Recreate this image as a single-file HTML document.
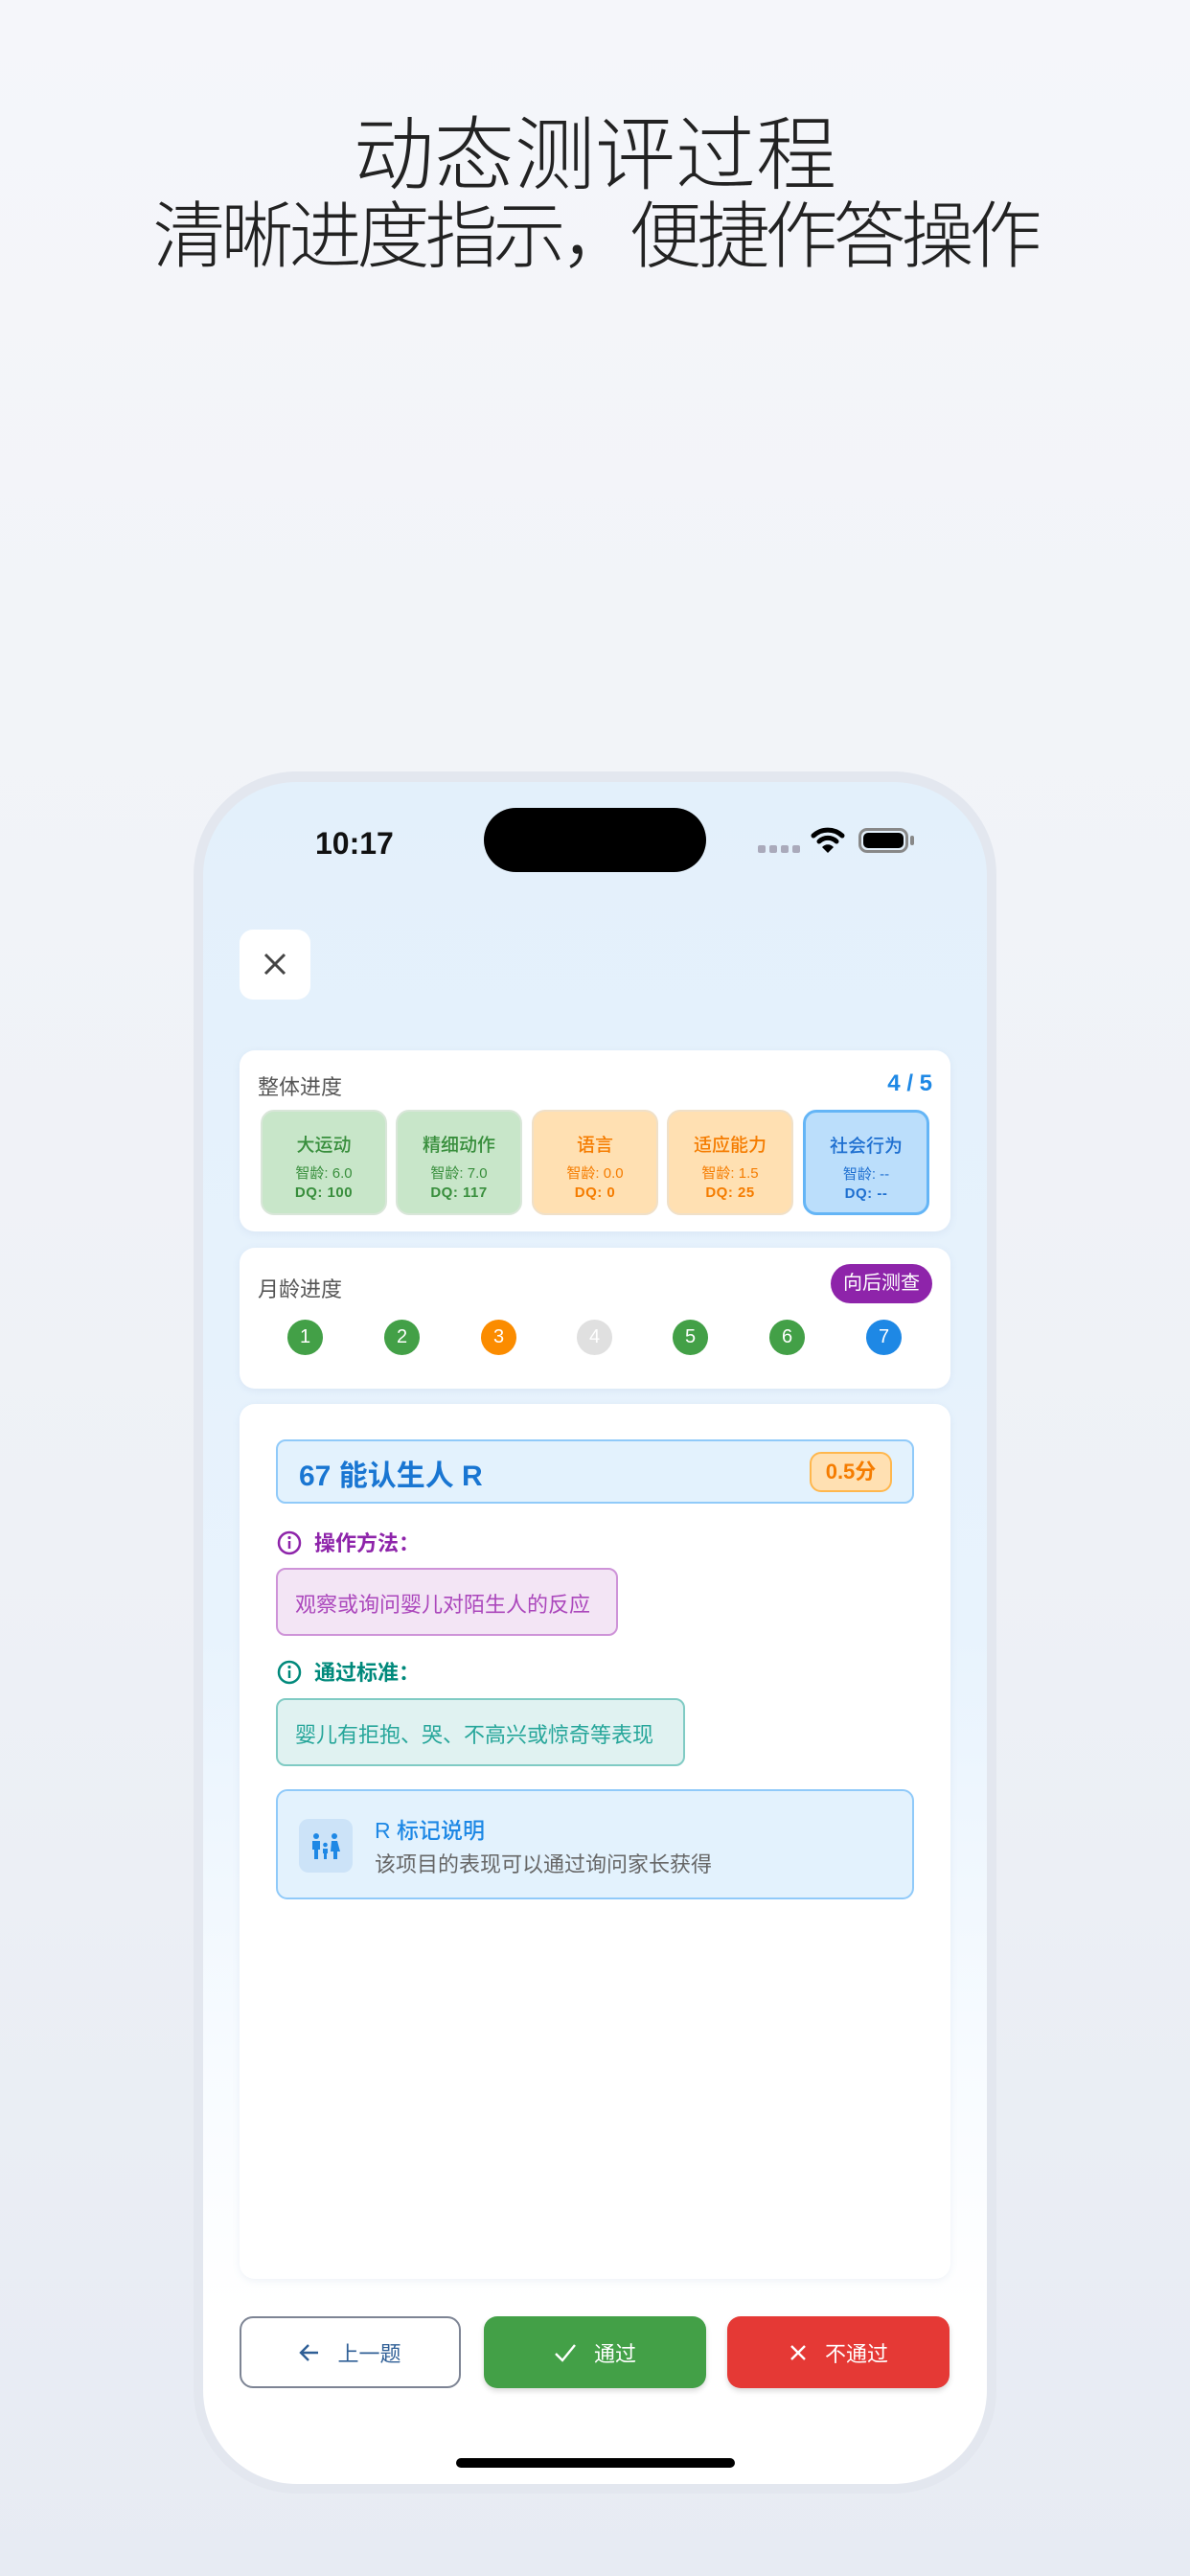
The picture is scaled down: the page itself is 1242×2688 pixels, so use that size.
<!DOCTYPE html>
<html><head><meta charset="utf-8"><style>
*{margin:0;padding:0;box-sizing:border-box}
body{width:1242px;height:2688px;overflow:hidden;background:linear-gradient(180deg,#f5f6fa 0%,#eef1f6 60%,#e7ebf3 100%);font-family:"Liberation Sans","Noto Sans CJK SC",sans-serif;position:relative}
.abs{position:absolute}
.t{position:absolute;left:0;width:1242px;text-align:center;font-weight:300;color:#222;line-height:1;white-space:nowrap}
.frame{left:202px;top:805px;width:838px;height:1797px;border-radius:108px;background:#e3e7ef}
.screen{left:212px;top:816px;width:818px;height:1776px;border-radius:98px;overflow:hidden;background:linear-gradient(180deg,#e3f0fb 0%,#e8f3fd 50%,#f7fbff 75%,#fff 90%)}
.card{position:absolute;background:#fff;border-radius:16px;box-shadow:0 2px 8px rgba(120,150,190,.12)}
.tile{position:absolute;top:62px;width:132px;height:110px;border-radius:14px;text-align:center;border:2px solid #ddd}
.tile .a{font-size:19px;margin-top:20px;font-weight:500}
.tile .b{font-size:15px;margin-top:6px}
.tile .c{font-size:15px;font-weight:bold;margin-top:2px;letter-spacing:.5px}
.dot{position:absolute;top:75px;width:37px;height:37px;border-radius:50%;color:#fff;font-size:20px;text-align:center;line-height:37px}
.btn{position:absolute;top:1601px;height:75px;border-radius:14px;font-size:22px;display:flex;align-items:center;justify-content:center;gap:18px}
</style></head><body>
<div class="t" style="top:120px;font-size:84px">动态测评过程</div>
<div class="t" style="top:210px;font-size:76px;letter-spacing:-5px">清晰进度指示，便捷作答操作</div>
<div class="abs frame"></div>
<div class="abs screen">
 <div class="abs" style="left:117px;top:46px;font-size:32px;font-weight:bold;color:#111">10:17</div>
 <div class="abs" style="left:293px;top:27px;width:232px;height:67px;border-radius:34px;background:#000"></div>
 <div class="abs" style="left:579px;top:66px;display:flex;gap:4px"><i style="width:8px;height:8px;border-radius:2px;background:#aab"></i><i style="width:8px;height:8px;border-radius:2px;background:#aab"></i><i style="width:8px;height:8px;border-radius:2px;background:#aab"></i><i style="width:8px;height:8px;border-radius:2px;background:#aab"></i></div>
 <svg class="abs" style="left:634px;top:46px" width="36" height="30" viewBox="0 0 36 30"><path d="M3 10 A22 22 0 0 1 33 10" stroke="#000" stroke-width="5" fill="none" stroke-linecap="round"/><path d="M9 16 A13 13 0 0 1 27 16" stroke="#000" stroke-width="5" fill="none" stroke-linecap="round"/><path d="M12 22 L18 28 L24 22 A8 8 0 0 0 12 22Z" fill="#000"/></svg>
 <div class="abs" style="left:684px;top:48px;width:52px;height:26px;border:3px solid #888;border-radius:9px;padding:2px"><div style="width:100%;height:100%;background:#000;border-radius:5px"></div></div>
 <div class="abs" style="left:738px;top:56px;width:4px;height:10px;background:#888;border-radius:2px"></div>

 <div class="abs" style="left:38px;top:154px;width:74px;height:73px;background:#fff;border-radius:14px"><svg width="74" height="73"><path d="M27 26 L47 46 M47 26 L27 46" stroke="#444" stroke-width="3"/></svg></div>

 <div class="card" style="left:38px;top:280px;width:742px;height:189px">
  <div class="abs" style="left:19px;top:21px;font-size:22px;color:#555">整体进度</div>
  <div class="abs" style="right:19px;top:21px;font-size:24px;font-weight:bold;color:#1e88e5">4 / 5</div>
  <div class="tile" style="left:22px;background:#c8e6c9;border-color:#d9e6d9;color:#388e3c"><div class="a">大运动</div><div class="b">智龄: 6.0</div><div class="c">DQ: 100</div></div>
  <div class="tile" style="left:163px;background:#c8e6c9;border-color:#d9e6d9;color:#388e3c"><div class="a">精细动作</div><div class="b">智龄: 7.0</div><div class="c">DQ: 117</div></div>
  <div class="tile" style="left:305px;background:#ffe0b2;border-color:#f0e0c8;color:#f57c00"><div class="a">语言</div><div class="b">智龄: 0.0</div><div class="c">DQ: 0</div></div>
  <div class="tile" style="left:446px;background:#ffe0b2;border-color:#f0e0c8;color:#f57c00"><div class="a">适应能力</div><div class="b">智龄: 1.5</div><div class="c">DQ: 25</div></div>
  <div class="tile" style="left:588px;background:#bbdefb;border:3px solid #64b5f6;color:#1e6fd0"><div class="a">社会行为</div><div class="b">智龄: --</div><div class="c">DQ: --</div></div>
 </div>

 <div class="card" style="left:38px;top:486px;width:742px;height:147px">
  <div class="abs" style="left:19px;top:26px;font-size:22px;color:#555">月龄进度</div>
  <div class="abs" style="left:617px;top:17px;width:106px;height:41px;border-radius:21px;background:#8e24aa;color:#fff;font-size:20px;text-align:center;line-height:41px">向后测查</div>
  <div class="dot" style="left:50px;background:#43a047">1</div>
  <div class="dot" style="left:151px;background:#43a047">2</div>
  <div class="dot" style="left:252px;background:#fb8c00">3</div>
  <div class="dot" style="left:352px;background:#e0e0e0">4</div>
  <div class="dot" style="left:452px;background:#43a047">5</div>
  <div class="dot" style="left:553px;background:#43a047">6</div>
  <div class="dot" style="left:654px;background:#1e88e5">7</div>
 </div>

 <div class="card" style="left:38px;top:649px;width:742px;height:913px">
  <div class="abs" style="left:38px;top:37px;width:666px;height:67px;background:#e3f2fd;border:2px solid #90caf9;border-radius:10px">
   <div class="abs" style="left:22px;top:11px;font-size:30px;font-weight:bold;color:#1976d2">67 能认生人 R</div>
   <div class="abs" style="left:555px;top:11px;width:86px;height:42px;background:#ffe0b2;border:2px solid #ffb74d;border-radius:12px;color:#f57c00;font-size:22px;font-weight:bold;text-align:center;line-height:38px">0.5分</div>
  </div>
  <svg class="abs" style="left:38px;top:131px" width="28" height="28"><circle cx="14" cy="14" r="11" stroke="#8e24aa" stroke-width="2.5" fill="none"/><path d="M14 12v8" stroke="#8e24aa" stroke-width="2.5"/><circle cx="14" cy="8.5" r="1.6" fill="#8e24aa"/></svg>
  <div class="abs" style="left:78px;top:128px;font-size:22px;font-weight:bold;color:#8e24aa">操作方法：</div>
  <div class="abs" style="left:38px;top:171px;width:357px;height:71px;background:#f3e5f5;border:2px solid #ce93d8;border-radius:10px;font-size:22px;color:#ab47bc;padding:19px 0 0 18px">观察或询问婴儿对陌生人的反应</div>
  <svg class="abs" style="left:38px;top:266px" width="28" height="28"><circle cx="14" cy="14" r="11" stroke="#00897b" stroke-width="2.5" fill="none"/><path d="M14 12v8" stroke="#00897b" stroke-width="2.5"/><circle cx="14" cy="8.5" r="1.6" fill="#00897b"/></svg>
  <div class="abs" style="left:78px;top:263px;font-size:22px;font-weight:bold;color:#00897b">通过标准：</div>
  <div class="abs" style="left:38px;top:307px;width:427px;height:71px;background:#e0f2f1;border:2px solid #80cbc4;border-radius:10px;font-size:22px;color:#26a69a;padding:19px 0 0 18px">婴儿有拒抱、哭、不高兴或惊奇等表现</div>
  <div class="abs" style="left:38px;top:402px;width:666px;height:115px;background:#e3f2fd;border:2px solid #90caf9;border-radius:12px">
   <div class="abs" style="left:22px;top:29px;width:56px;height:56px;background:#cce3f8;border-radius:10px">
    <svg width="56" height="56" viewBox="0 0 56 56" fill="#1e88e5"><circle cx="18" cy="18" r="3"/><path d="M14 23h8v9h-2v10h-4V32h-2z"/><circle cx="37" cy="18" r="3"/><path d="M34 23h6l3 11h-3v8h-4v-8h-3z"/><circle cx="27.5" cy="27" r="2.3"/><path d="M25 31h5v5h-1v6h-3v-6h-1z"/></svg>
   </div>
   <div class="abs" style="left:101px;top:22px;font-size:23px;color:#1e88e5;font-weight:500">R 标记说明</div>
   <div class="abs" style="left:101px;top:59px;font-size:22px;color:#666">该项目的表现可以通过询问家长获得</div>
  </div>
 </div>

 <div class="btn" style="left:38px;width:231px;border:2px solid #7d8494;background:#fff;color:#2f5f96"><svg width="22" height="22" viewBox="0 0 22 22"><path d="M20 11H3M10 3L2 11l8 8" stroke="#2f5f96" stroke-width="2.4" fill="none"/></svg><span>上一题</span></div>
 <div class="btn" style="left:293px;width:232px;background:#43a047;color:#fff;box-shadow:0 3px 6px rgba(0,0,0,.15)"><svg width="24" height="22" viewBox="0 0 24 22"><path d="M2 12l7 7L22 3" stroke="#fff" stroke-width="2.4" fill="none"/></svg><span>通过</span></div>
 <div class="btn" style="left:547px;width:232px;background:#e53935;color:#fff;box-shadow:0 3px 6px rgba(0,0,0,.15)"><svg width="20" height="20" viewBox="0 0 20 20"><path d="M3 3l14 14M17 3L3 17" stroke="#fff" stroke-width="2.4"/></svg><span>不通过</span></div>

 <div class="abs" style="left:264px;top:1749px;width:291px;height:10px;border-radius:5px;background:#000"></div>
</div>
</body></html>
